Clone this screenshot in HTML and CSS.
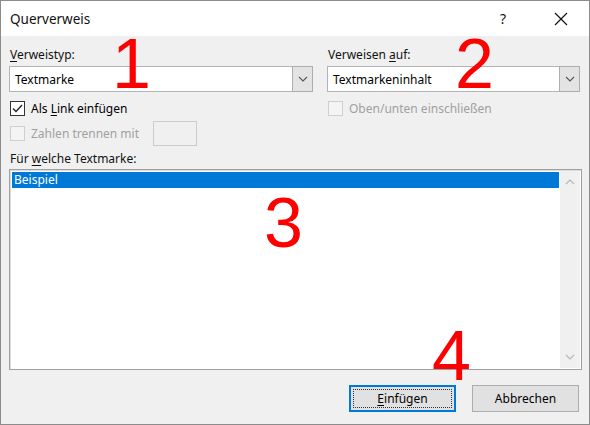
FILE: index.html
```html
<!DOCTYPE html>
<html lang="de">
<head>
  <meta charset="UTF-8" />
  <title>Querverweis</title>
  <link rel="stylesheet" href="styles.css">
</head>
<body>
  <div class="window">
    <div class="titlebar">
      <span class="title">Querverweis</span>
      <div class="title-buttons">
        <span class="help">?</span>
        <span class="close">
          <svg width="14" height="14" viewBox="0 0 14 14"><path d="M1 1L13 13M13 1L1 13" stroke="#111" stroke-width="1.2" fill="none"/></svg>
        </span>
      </div>
    </div>

    <div class="content">
      <div class="columns">
        <div class="col col-left">
          <div class="field-label"><u>V</u>erweistyp:</div>
          <div class="combo">
            <span class="combo-text">Textmarke</span>
            <span class="drop">
              <svg width="10" height="6" viewBox="0 0 10 6"><path d="M1 1L5 5L9 1" stroke="#555" stroke-width="1.1" fill="none"/></svg>
            </span>
          </div>
          <div class="check-row first">
            <span class="box checked">
              <svg width="11" height="9" viewBox="0 0 11 9"><path d="M1 4.5L4 7.5L10 1" stroke="#222" stroke-width="1.3" fill="none"/></svg>
            </span>
            <span>Als <u>L</u>ink einfügen</span>
          </div>
          <div class="check-row second disabled">
            <span class="box"></span>
            <span>Zahlen trennen mit</span>
            <span class="small-input"></span>
          </div>
        </div>

        <div class="col col-right">
          <div class="field-label">Verweisen <u>a</u>uf:</div>
          <div class="combo">
            <span class="combo-text">Textmarkeninhalt</span>
            <span class="drop">
              <svg width="10" height="6" viewBox="0 0 10 6"><path d="M1 1L5 5L9 1" stroke="#555" stroke-width="1.1" fill="none"/></svg>
            </span>
          </div>
          <div class="check-row first disabled">
            <span class="box"></span>
            <span>Oben/unten einschließen</span>
          </div>
        </div>
      </div>

      <div class="field-label list-label">Für <u>w</u>elche Textmarke:</div>
      <div class="listbox">
        <div class="list-items">
          <div class="item selected">Beispiel</div>
        </div>
        <div class="scrollbar">
          <svg width="10" height="6" viewBox="0 0 10 6"><path d="M1 5L5 1L9 5" stroke="#b5b5b5" stroke-width="1.1" fill="none"/></svg>
          <svg width="10" height="6" viewBox="0 0 10 6"><path d="M1 1L5 5L9 1" stroke="#b5b5b5" stroke-width="1.1" fill="none"/></svg>
        </div>
      </div>

      <div class="buttons">
        <button class="btn primary"><span class="focus"><u>E</u>infügen</span></button>
        <button class="btn">Abbrechen</button>
      </div>
    </div>

    <div class="marker m1">1</div>
    <div class="marker m2">2</div>
    <div class="marker m3">3</div>
    <div class="marker m4">4</div>
  </div>
</body>
</html>
```

FILE: styles.css
```css
* {
  box-sizing: border-box;
}

body {
  margin: 0;
  background: #fff;
  font-family: 'Segoe UI', 'Noto Sans', sans-serif;
  font-size: 12px;
  color: #000;
}

.window {
  position: relative;
  width: 590px;
  height: 425px;
  border: 1px solid #8c8c8c;
  background: #f0f0f0;
  display: flex;
  flex-direction: column;
}

.titlebar {
  height: 35px;
  background: #fff;
  display: flex;
  align-items: center;
  justify-content: space-between;
  padding-left: 9px;
}

.title {
  font-size: 13.5px;
  color: #111;
}

.title-buttons {
  display: flex;
  align-items: center;
  height: 100%;
}

.help {
  width: 70px;
  text-align: center;
  font-size: 14px;
  color: #111;
}

.close {
  width: 46px;
  height: 100%;
  display: flex;
  align-items: center;
  justify-content: center;
  margin-right: 5px;
}

.content {
  flex: 1;
  padding: 11px 8px 0 8px;
  display: flex;
  flex-direction: column;
}

.columns {
  display: grid;
  grid-template-columns: 304px 253px;
  column-gap: 14px;
}

.field-label {
  height: 16px;
  line-height: 16px;
  color: #111;
  padding-left: 1px;
}

u {
  text-decoration-thickness: 1px;
  text-underline-offset: 2px;
}

.combo {
  margin-top: 3px;
  height: 26px;
  background: #fff;
  border: 1px solid #b4b4b4;
  display: flex;
  align-items: center;
}

.combo-text {
  flex: 1;
  padding-left: 5px;
}

.drop {
  width: 21px;
  height: 26px;
  margin: -1px -1px -1px 0;
  background: #e3e3e3;
  border: 1px solid #adadad;
  display: flex;
  align-items: center;
  justify-content: center;
}

.check-row {
  display: flex;
  align-items: center;
  gap: 6px;
  padding-left: 1px;
}

.check-row.first {
  margin-top: 7px;
  height: 18px;
}

.check-row.second {
  margin-top: 4px;
  height: 25px;
}

.box {
  width: 15px;
  height: 15px;
  border: 1px solid #333;
  background: #fff;
  display: flex;
  align-items: center;
  justify-content: center;
}

.disabled {
  color: #a0a0a0;
}

.disabled .box {
  border-color: #cfcfcf;
  background: #f4f4f4;
}

.small-input {
  width: 44px;
  height: 25px;
  margin-left: 8px;
  border: 1px solid #cccccc;
  background: #f0f0f0;
}

.list-label {
  margin-top: 5px;
}

.listbox {
  margin-top: 2px;
  width: 573px;
  height: 201px;
  background: #fff;
  border: 1px solid #a0a0a0;
  box-shadow: inset 1px 1px 0 #dcdcdc;
  display: flex;
  padding: 2px 1px 1px 2px;
}

.list-items {
  flex: 1;
}

.item {
  height: 16px;
  line-height: 16px;
  padding-left: 2px;
}

.item.selected {
  background: #0078d7;
  color: #fff;
}

.scrollbar {
  width: 20px;
  margin: -1px 0 0 1px;
  background: #f0f0f0;
  display: flex;
  flex-direction: column;
  justify-content: space-between;
  align-items: center;
  padding: 8px 0 8px;
}

.buttons {
  margin-top: 15px;
  display: flex;
  justify-content: flex-end;
  gap: 16px;
  padding-right: 2px;
}

.btn {
  width: 107px;
  height: 27px;
  background: #e1e1e1;
  border: 1px solid #adadad;
  font-family: inherit;
  font-size: 12px;
  color: #000;
  padding: 0;
}

.btn.primary {
  border: 1px solid #0078d7;
  box-shadow: inset 0 0 0 1px #0078d7;
  padding: 3px;
}

.focus {
  display: flex;
  align-items: center;
  justify-content: center;
  height: 100%;
  border: 1px dotted #333;
}

.marker {
  position: absolute;
  font-family: 'Liberation Sans', Arial, sans-serif;
  font-size: 70px;
  line-height: 1;
  color: #f00;
}

.m1 { left: 111px; top: 28px; }
.m2 { left: 454px; top: 28px; }
.m3 { left: 263px; top: 187px; }
.m4 { left: 431px; top: 320px; }
```
